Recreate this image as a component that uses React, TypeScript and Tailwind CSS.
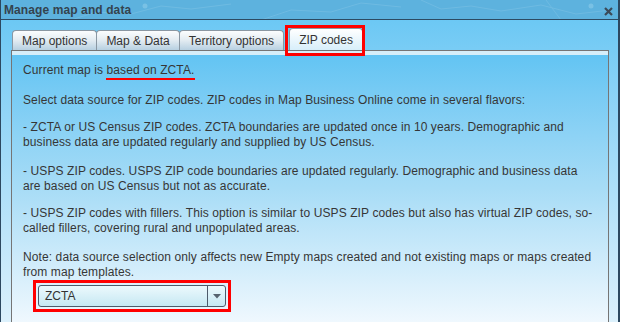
import { ReactNode } from 'react';

function Tab({ label, active, last }: { label: string; active?: boolean; last?: boolean }) {
    if (active) {
        return (
            <div className="relative ml-[5px]">
                <div className="h-[22px] px-[9px] border border-b-0 border-[#8a97a2] rounded-t-[4px] bg-gradient-to-b from-[#ffffff] to-[#d7eefa] leading-[22px] text-[#333]">
                    {label}
                </div>
                {/* annotation box */}
                <div className="absolute -left-[4px] -right-[2px] -top-[3px] -bottom-[6px] border-[3px] border-[#ff0000]" />
            </div>
        );
    }
    return (
        <div className={'h-[20px] px-[9px] border border-b-0 border-[#8a97a2] rounded-t-[4px] bg-gradient-to-b from-[#fbfdfe] via-[#e2ebf1] to-[#b7d0e1] leading-[20px] text-[#333] ' + (last ? '' : '-mr-[1px]')}>
            {label}
        </div>
    );
}

function Para({ className, children }: { className?: string; children: ReactNode }) {
    return <p className={'leading-[15px] tracking-[0.1px] whitespace-nowrap ' + (className || '')}>{children}</p>;
}

export default function App() {
    return (
        <div className="w-[620px] h-[322px] overflow-hidden flex flex-col border-l border-r-2 border-[#2c4860] font-['Liberation_Sans',Arial,sans-serif] text-[12px] text-[#363636]">
            <div className="relative h-[20px] shrink-0 bg-[#5db2de] border-b border-[#2c4a62] flex items-center px-[3px] overflow-hidden">
                <svg className="absolute inset-0" width="620" height="20" viewBox="0 0 620 20">
                    <g stroke="#7fc3e6" strokeWidth="1" fill="none" opacity="0.5">
                        <path d="M70 20 L95 12 L130 14 L160 6 L190 9 L230 4" />
                        <path d="M260 20 L290 10 L330 12 L360 3 L400 7" />
                        <path d="M420 0 L440 9 L470 6 L500 11 L540 5 L575 14 L610 10" />
                        <path d="M545 0 L560 20" />
                    </g>
                    <circle cx="590" cy="6" r="2.5" fill="#8ccbea" opacity="0.6" />
                    <circle cx="144" cy="6" r="2.5" fill="#8ccbea" opacity="0.6" />
                </svg>
                <span className="relative font-bold text-[12px] tracking-[0.1px] text-[#34434e]">Manage map and data</span>
                <svg className="absolute right-[5px] top-[7px]" width="9" height="9" viewBox="0 0 9 9">
                    <path d="M1 1 L8 8 M8 1 L1 8" stroke="#3b4a58" strokeWidth="2.2" />
                </svg>
            </div>
            <div className="flex-1 flex flex-col bg-gradient-to-b from-[#6cc8f4] to-[#dcf1fc] pt-[8px] pl-[10px] pr-[9px]">
                <div className="flex items-end ml-[1px]">
                    <Tab label="Map options" />
                    <Tab label="Map & Data" />
                    <Tab label="Territory options" last />
                    <Tab label="ZIP codes" active />
                </div>
                <div className="flex-1 flex flex-col border border-b-0 border-[#757575]">
                    <div className="h-[4px] bg-[#d6eef9] shrink-0" />
                    <div className="flex-1 bg-gradient-to-b from-[#62c4f3] via-[#a7dcf6] to-[#eff8fe] pl-[11px] pt-[8px]">
                        <Para>
                            Current map is{' '}
                            <span className="relative">
                                based on ZCTA.
                                <span className="absolute -left-[1px] -right-[1px] bottom-[-3px] h-[2px] bg-[#ff0000]" />
                            </span>
                        </Para>
                        <Para className="mt-[15px]">
                            Select data source for ZIP codes. ZIP codes in Map Business Online come in several flavors:
                        </Para>
                        <Para className="mt-[12px]">
                            - ZCTA or US Census ZIP codes. ZCTA boundaries are updated once in 10 years. Demographic and
                            <br />
                            business data are updated regularly and supplied by US Census.
                        </Para>
                        <Para className="mt-[14px]">
                            - USPS ZIP codes. USPS ZIP code boundaries are updated regularly. Demographic and business data
                            <br />
                            are based on US Census but not as accurate.
                        </Para>
                        <Para className="mt-[12px]">
                            - USPS ZIP codes with fillers. This option is similar to USPS ZIP codes but also has virtual ZIP codes, so-
                            <br />
                            called fillers, covering rural and unpopulated areas.
                        </Para>
                        <Para className="mt-[14px]">
                            Note: data source selection only affects new Empty maps created and not existing maps or maps created
                            <br />
                            from map templates.
                        </Para>
                        <div className="ml-[10px] w-fit border-[3px] border-[#ff0000] p-[2px]">
                            <div className="w-[188px] h-[22px] flex rounded-[3px] border border-[#4d5b6b] bg-gradient-to-b from-[#ecf9fd] to-[#c6e8f3]">
                                <div className="flex-1 pl-[6px] leading-[20px] text-[12px] text-[#333]">ZCTA</div>
                                <div className="w-[18px] border-l border-[#4d5b6b] flex items-center justify-center">
                                    <svg width="8" height="5" viewBox="0 0 8 5">
                                        <path d="M0 0 L8 0 L4 4.5 Z" fill="#56636f" />
                                    </svg>
                                </div>
                            </div>
                        </div>
                    </div>
                </div>
            </div>
        </div>
    );
}
